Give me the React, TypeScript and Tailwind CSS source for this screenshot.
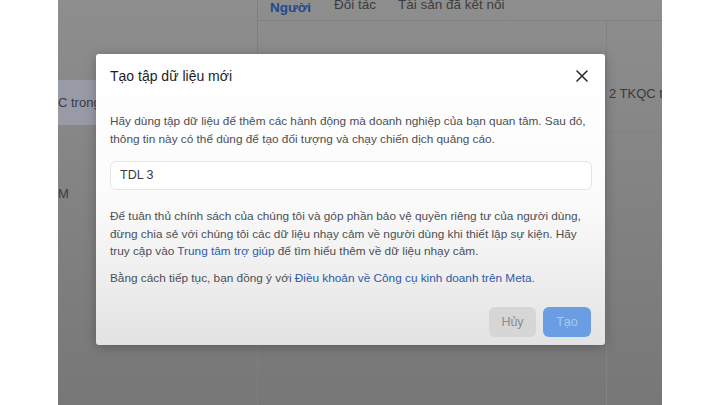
import React from "react";

function CloseIcon() {
  return (
    <svg width="14" height="14" viewBox="0 0 14 14" fill="none">
      <path d="M2 2L12 12M12 2L2 12" stroke="#2b2d31" strokeWidth="1.6" strokeLinecap="round" />
    </svg>
  );
}

export default function App() {
  return (
    <div
      className="flex h-[405px] w-[720px] overflow-hidden bg-white"
      style={{ fontFamily: '"Liberation Sans", Arial, sans-serif' }}
    >
      <div className="w-[58px] shrink-0 bg-white" />

      <div className="relative flex w-[604px] shrink-0 bg-linear-to-b from-[#8e8e8e] to-[#777777]">
        {/* page under the overlay */}
        <div className="flex w-[200px] shrink-0 flex-col overflow-hidden border-r border-[#7f7f7f]">
          <div className="h-[80px]" />
          <div className="flex h-[45px] items-center bg-[#989aa6] text-[13px] text-[#3c3c40]">
            <span className="whitespace-nowrap">C trong</span>
          </div>
          <div className="flex h-[78px] items-end text-[13px] text-[#3c3c40]">
            <span>M</span>
          </div>
        </div>

        <div className="flex flex-1 flex-col overflow-hidden">
          <div className="flex h-[21px] items-end gap-[10px] border-b border-[#828282] pl-[11px] text-[13.5px] text-[#3d3d3d]">
            <div className="flex h-[21px] flex-col justify-end">
              <span className="-mb-[2px] px-[1px] font-bold text-[#23488e]">Người</span>
              <div className="mt-[4px] h-[3px] w-[56px] -ml-[1px] rounded-full bg-[#2a57a5]" />
            </div>
            <span className="mb-[5px]">Đối tác</span>
            <span className="mb-[5px] ml-[12px] whitespace-nowrap">Tài sản đã kết nối</span>
          </div>
          <div className="flex flex-1">
            <div className="flex-1" />
            <div className="flex w-[56px] flex-col border-l border-[#828282] text-[13px] text-[#3a3a3a]">
              <div className="flex h-[82px] items-end whitespace-nowrap pl-[2px]">2 TKQC tro</div>
              <div className="h-[30px] border-b border-[#828282]" />
              <div className="h-[30px] border-b border-[#828282]" />
            </div>
          </div>
        </div>

        {/* modal */}
        <div className="absolute left-[38px] top-[54px] flex h-[291px] w-[509px] flex-col rounded-[3px] bg-linear-to-b from-white via-[#fbfbfb] to-[#e3e3e3] px-[14px] shadow-[0_2px_12px_rgba(0,0,0,0.25)]">
          <div className="flex h-[43px] items-center justify-between pr-[2px] pt-[1px]">
            <span className="text-[14px] font-medium text-[#1c1e21]">Tạo tập dữ liệu mới</span>
            <CloseIcon />
          </div>

          <p className="mt-[15px] whitespace-nowrap text-[11.8px] leading-[18px] text-[#4b4f56]">
            Hãy dùng tập dữ liệu để thêm các hành động mà doanh nghiệp của bạn quan tâm. Sau đó,
            <br />
            thông tin này có thể dùng để tạo đối tượng và chạy chiến dịch quảng cáo.
          </p>

          <div className="mt-[13px] flex h-[29px] w-[482px] items-center rounded-[6px] border border-[#e2e4e8] bg-white px-[9px] text-[12.5px] text-[#3a3b3f]">
            TDL 3
          </div>

          <p className="mt-[18px] whitespace-nowrap text-[11.8px] leading-[17.5px] text-[#4b4f56]">
            Để tuân thủ chính sách của chúng tôi và góp phần bảo vệ quyền riêng tư của người dùng,
            <br />
            đừng chia sẻ với chúng tôi các dữ liệu nhạy cảm về người dùng khi thiết lập sự kiện. Hãy
            <br />
            truy cập vào <span className="text-[#2d5ba8]">Trung tâm trợ giúp</span> để tìm hiểu thêm về dữ liệu nhạy cảm.
          </p>

          <p className="mt-[8px] whitespace-nowrap text-[11.8px] leading-[18px] text-[#4b4f56]">
            Bằng cách tiếp tục, bạn đồng ý với{" "}
            <span className="text-[#2d5ba8]">Điều khoản về Công cụ kinh doanh trên Meta.</span>
          </p>

          <div className="mt-auto mb-[8px] flex justify-end gap-[7px]">
            <button className="h-[30px] w-[47px] rounded-[6px] bg-[#d6d6d6] text-[12.5px] text-[#8b8b8b]">Hủy</button>
            <button className="h-[30px] w-[48px] rounded-[6px] bg-[#6a9de2] text-[12.5px] text-[#a9c9f2]">Tạo</button>
          </div>
        </div>
      </div>

      <div className="flex-1 bg-white" />
    </div>
  );
}
